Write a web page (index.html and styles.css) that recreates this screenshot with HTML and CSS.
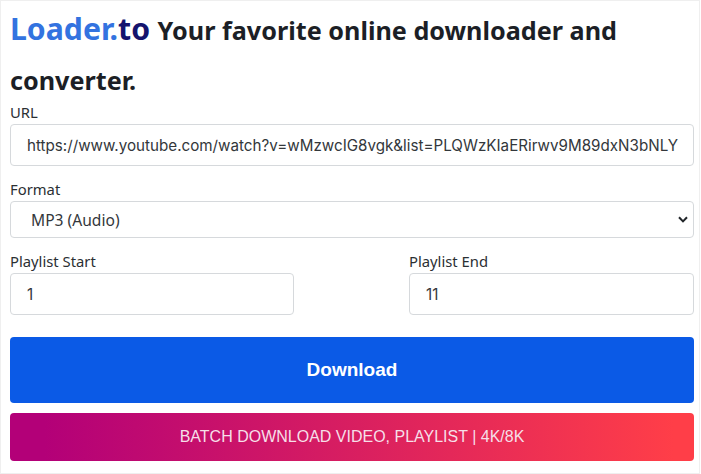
FILE: index.html
```html
<!DOCTYPE html>
<html lang="en">
<head>
<meta charset="utf-8">
<title>Loader.to</title>
<link rel="stylesheet" href="styles.css">
</head>
<body>
<main class="frame">
  <h1 class="title"><span class="logo-a">Loader.</span><span class="logo-b">to</span> Your favorite online downloader and converter.</h1>
  <div class="field">
    <label class="label">URL</label>
    <div class="control control-url">https://www.youtube.com/watch?v=wMzwcIG8vgk&amp;list=PLQWzKIaERirwv9M89dxN3bNLY</div>
  </div>
  <div class="field">
    <label class="label">Format</label>
    <div class="control control-select">
      <span>MP3 (Audio)</span>
      <svg class="chev" viewBox="0 0 10 7" width="10" height="7"><path d="M1 1.2 5 5.4 9 1.2" fill="none" stroke="#212529" stroke-width="2"/></svg>
    </div>
  </div>
  <div class="pair">
    <div class="col">
      <label class="label">Playlist Start</label>
      <div class="control control-url">1</div>
    </div>
    <div class="col">
      <label class="label">Playlist End</label>
      <div class="control control-url">11</div>
    </div>
  </div>
  <div class="btn-primary">Download</div>
  <div class="btn-batch">BATCH DOWNLOAD VIDEO, PLAYLIST | 4K/8K</div>
</main>
</body>
</html>
```
FILE: styles.css
```css
html, body { margin: 0; padding: 0; background: #fff; }
body { width: 701px; height: 474px; overflow: hidden; }
.frame {
  box-sizing: border-box;
  width: 700px;
  height: 474px;
  border: 1px solid #efefef;
  padding: 3px 5px 0 9px;
  font-family: "Noto Sans", sans-serif;
  color: #212529;
}
.title {
  margin: 0;
  font-family: "Noto Sans", sans-serif;
  font-size: 25.2px;
  font-weight: 700;
  line-height: 50px;
  color: #1c1f26;
  height: 99px;
}
.logo-a, .logo-b { font-size: 30.2px; font-weight: 700; }
.logo-a { color: #3373e0; }
.logo-b { color: #14146e; margin-right: 1px; }
.field { margin-bottom: 14px; }
.label { display: block; font-size: 14.8px; line-height: 18px; height: 21px; color: #2b2f33; }
.control {
  box-sizing: border-box;
  border: 1px solid #d6d9dc;
  border-radius: 4px;
  background: #fff;
  font-family: Inter, sans-serif;
  font-size: 15.2px;
  color: #33373b;
  display: flex;
  align-items: center;
}
.control-url { height: 42px; padding: 0 12px 0 16px; white-space: nowrap; overflow: hidden; }
.control-select { height: 37px; padding: 0 5px 0 20px; justify-content: space-between; font-family: "Noto Sans", sans-serif; font-size: 15.6px; }
.pair { display: grid; grid-template-columns: 284px 285px; justify-content: space-between; margin-bottom: 22px; }
.btn-primary {
  height: 66px;
  border-radius: 4px;
  background: #0b5ae6;
  color: #fff;
  font-family: "Liberation Sans", sans-serif;
  font-size: 19px;
  font-weight: 700;
  display: flex;
  align-items: center;
  justify-content: center;
  margin-bottom: 10px;
}
.btn-batch {
  height: 48px;
  border-radius: 4px;
  background: linear-gradient(90deg, #b30078 5%, #ff3e48 97%);
  color: #f6dfe8;
  font-family: "Liberation Sans", sans-serif;
  font-size: 16px;
  display: flex;
  align-items: center;
  justify-content: center;
}
```
